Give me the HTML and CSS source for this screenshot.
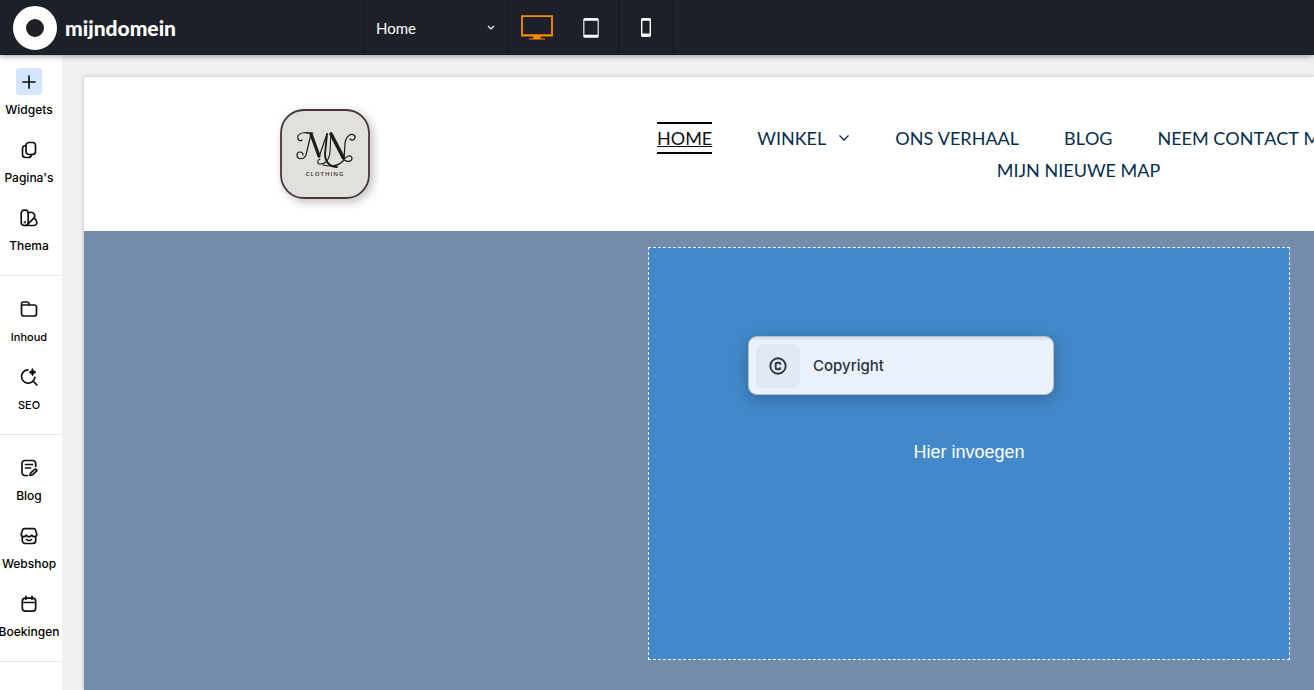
FILE: index.html
```html
<!DOCTYPE html>
<html lang="nl">
<head>
<meta charset="utf-8">
<title>Mijndomein editor</title>
<link rel="stylesheet" href="styles.css">
</head>
<body>
<header class="topbar">
  <a class="brand" href="#">
    <svg class="brand-mark" viewBox="0 0 44 44" aria-hidden="true"><circle cx="22" cy="22" r="15.5" fill="none" stroke="#fff" stroke-width="13"/></svg>
    <span>mijndomein</span>
  </a>
  <div class="page-picker">
    <select class="page-select" aria-label="Pagina"><option>Home</option></select>
    <svg class="picker-arrow" viewBox="0 0 8 6" aria-hidden="true"><path d="M1 1l3 3 3-3" fill="none" stroke="#fff" stroke-width="1.2"/></svg>
  </div>
  <button class="device" aria-label="Desktop">
    <svg width="32" height="25" viewBox="0 0 32 25"><path d="M1 1.200h30v19.300H1z" fill="none" stroke="#ff8a00" stroke-width="1.800"/><path d="M1 20h30M13 21h6v3h-6zM8 24h16" fill="#ff8a00" stroke="#ff8a00" stroke-width="1.200"/></svg>
  </button>
  <button class="device device-end" aria-label="Tablet">
    <svg width="16" height="20" viewBox="0 0 16 20"><rect x=".8" y=".8" width="14.400" height="18.400" rx="1" fill="none" stroke="#ddd" stroke-width="1.300"/><path d="M1 1.500h14M1 18h14" stroke="#fff" stroke-width="2.400"/></svg>
  </button>
  <button class="device device-end" aria-label="Mobiel">
    <svg width="10" height="19" viewBox="0 0 10 19"><rect x=".7" y=".7" width="8.600" height="17.600" rx="1" fill="none" stroke="#fff" stroke-width="1.400"/><path d="M1 1.500h8M1 16.800h8" stroke="#fff" stroke-width="2.600"/></svg>
  </button>
</header>
<div class="workspace">
  <nav class="sidebar" aria-label="Editor">
    <div class="group group-first">
      <button class="tool active"><span class="tool-icon"><svg viewBox="0 0 18 18"><path d="M9 3v12M3 9h12"/></svg></span>Widgets</button>
      <button class="tool"><span class="tool-icon"><svg viewBox="0 0 18 18"><rect x="6" y="1.500" width="9.500" height="12" rx="3"/><path d="M6 4.500C4 4.500 2.500 5.500 2.500 7.500v6a3 3 0 0 0 3 3h2.800c1.900 0 3-.9 3.400-3"/></svg></span>Pagina's</button>
      <button class="tool"><span class="tool-icon"><svg viewBox="0 0 18 18"><rect x="1.200" y="1.200" width="7" height="15.300" rx="3"/><path d="M8.200 4.200c3-2 5.500-.5 6.300 1.500.6 1.500 0 2.700-1 3.700L7.500 15.500M5 16.500h9c2.200 0 3.200-2.400 2.600-4-.4-1.500-1.300-2.700-2.500-3.200"/><circle cx="4.800" cy="13.300" r=".4"/></svg></span>Thema</button>
    </div>
    <div class="group">
      <button class="tool small"><span class="tool-icon"><svg viewBox="0 0 18 18"><path d="M1.500 5v8.500A2.500 2.500 0 0 0 4 16h10a2.500 2.500 0 0 0 2.500-2.500V7.300A2.300 2.300 0 0 0 14.200 5zM1.500 5V3.800C1.500 2.700 2.200 2 3.300 2H7c1 0 1.600.5 2 1.400L9.600 5"/></svg></span>Inhoud</button>
      <button class="tool small"><span class="tool-icon"><svg viewBox="0 0 18 18"><path d="M8 1.800a6.700 6.700 0 1 0 6.900 7.500M13 13l3.800 3.800"/><path d="M12.500.7l1.300 2.200 2.200 1.300-2.200 1.300-1.300 2.200-1.300-2.200L9 4.200l2.200-1.300z" fill="#111" stroke-width=".8"/></svg></span>SEO</button>
    </div>
    <div class="group">
      <button class="tool"><span class="tool-icon"><svg viewBox="0 0 18 18"><path d="M7.500 16.500H5A3 3 0 0 1 2 13.500v-9a3 3 0 0 1 3-3h7.700a3 3 0 0 1 3 3v3M5.500 5.500h7M5.500 9h5M10.500 14.200l4.200-3.800c1.300-.9 2.700.7 1.800 1.800l-3.800 3.500-2.700.8z"/></svg></span>Blog</button>
      <button class="tool"><span class="tool-icon"><svg viewBox="0 0 18 18"><path d="M2.300 9.500v4a3 3 0 0 0 3 3h7.400a3 3 0 0 0 3-3v-4M1.300 7l1.300-4.200c.3-.8.800-1.200 1.600-1.200h9.600c.8 0 1.300.4 1.600 1.200L16.700 7c.5 2.800-3.200 3.700-4.900 1.200-1 2.200-4.600 2.200-5.600 0C4.500 10.700.8 9.800 1.300 7zM6.500 12.500c1.300 1.300 3.700 1.300 5 0"/></svg></span>Webshop</button>
      <button class="tool"><span class="tool-icon"><svg viewBox="0 0 18 18"><rect x="2.300" y="3.200" width="13.400" height="13" rx="3.200"/><path d="M2.300 7.500h13.400M6 1.300v3M12 1.300v3"/></svg></span>Boekingen</button>
    </div>
  </nav>
  <main class="stage">
    <div class="site">
      <header class="site-header">
        <a class="site-logo" href="#" aria-label="MN Clothing">
          <svg viewBox="0 0 90 90">
            <rect x="1" y="1" width="88" height="88" rx="23" fill="#e2e0db" stroke="#45373a" stroke-width="1.800"/>
            <g fill="none" stroke="#1b1c1b" stroke-linecap="round">
              <path d="M22 31c-2 2-5 0-4-4 2-4 9-4 13-2M31 25l-5 21c-2 5-9 5-9 0 0-4 6-4 6 0" stroke-width="1.200"/>
              <path d="M31 25l8 22" stroke-width="3.200"/>
              <path d="M39 48l8-23M27 24h6" stroke-width="1.200"/>
              <path d="M47 25l-2 20c0 8 5 13 12 13" stroke-width="1.900"/>
              <path d="M51 25c-1 8 0 17-2 23-2 6-5 7-9 7-3 0-3-4 0-5" stroke-width="1.100"/>
              <path d="M51 25l12 23" stroke-width="3.600"/>
              <path d="M64 50l1-16c1-7 6-10 9-8 3 3-1 7-4 4M62 49c4 5 10 4 10 0-1-4-6-2-8 2-5 6-13 7-21 5" stroke-width="1.200"/>
            </g>
            <text x="45" y="67" text-anchor="middle" class="logo-text">CLOTHING</text>
          </svg>
        </a>
        <nav class="site-nav" aria-label="Site">
          <div class="nav-row">
            <a class="nav-link current" href="#">HOME</a>
            <a class="nav-link" href="#">WINKEL<svg width="12" height="8" viewBox="0 0 12 8"><path d="M1.500 1.500L6 6l4.500-4.500" fill="none" stroke="#052d4d" stroke-width="1.300"/></svg></a>
            <a class="nav-link" href="#">ONS VERHAAL</a>
            <a class="nav-link" href="#">BLOG</a>
            <a class="nav-link" href="#">NEEM CONTACT MET</a>
          </div>
          <div class="nav-row second">
            <a class="nav-link" href="#">MIJN NIEUWE MAP</a>
          </div>
        </nav>
      </header>
      <section class="hero">
        <div class="dropzone">
          <span>Hier invoegen</span>
          <div class="dragged">
            <span class="dragged-icon"><svg width="18" height="18" viewBox="0 0 18 18"><circle cx="9" cy="9" r="7.700" stroke-width="1.900"/><path d="M11.300 7.700V7c0-.9-.5-1.300-1.300-1.300H8C7.200 5.700 6.700 6.100 6.700 7v4c0 .9.500 1.300 1.300 1.300h2c.8 0 1.300-.4 1.300-1.300v-.7" stroke-width="1.900"/></svg></span>
            <span>Copyright</span>
          </div>
        </div>
      </section>
    </div>
  </main>
</div>
</body>
</html>
```
FILE: styles.css
```css
* { box-sizing: border-box; }
body { margin: 0; height: 100vh; display: flex; flex-direction: column; overflow: hidden; background: #f1f1f1; font-family: Inter, sans-serif; }
button { border: 0; padding: 0; background: none; font-family: inherit; cursor: pointer; }
a { text-decoration: none; }

.topbar { display: flex; flex: none; height: 55px; background: #1e2029; box-shadow: 0 1px 6px rgba(0, 0, 0, .4); z-index: 2; }
.brand { display: flex; align-items: center; gap: 8px; width: 364px; padding-left: 13px; color: #fff; font: 900 21px/24px Lato, sans-serif; }
.brand-mark { width: 44px; height: 44px; }
.page-picker { display: grid; align-items: center; width: 145px; border: solid #13151c; border-width: 0 1px; }
.page-select { grid-area: 1 / 1; height: 100%; padding: 0 11px; border: 0; appearance: none; background: none; color: #fff; font: 400 15px/20px Lato, sans-serif; }
.picker-arrow { grid-area: 1 / 1; justify-self: end; width: 8px; margin-right: 13px; pointer-events: none; }
.device { display: grid; place-items: center; width: 55px; }
.device-end { border-right: 1px solid #13151c; }

.workspace { display: flex; flex: 1; min-height: 0; }
.sidebar { flex: none; width: 62px; background: #fff; }
.group { display: flex; flex-direction: column; gap: 18px; padding: 19px 4px 21px 0; border-bottom: 1px solid #e9e9e9; }
.group-first { padding-top: 13px; }
.tool { display: flex; flex-direction: column; align-items: center; gap: 7px; color: #000; font-size: 12px; font-weight: 500; line-height: 16px; white-space: nowrap; }
.small { font-size: 11px; }
.tool-icon { display: grid; place-items: center; width: 26px; height: 27px; border-radius: 4px; }
.tool-icon svg { width: 18px; height: 18px; fill: none; stroke: #111; stroke-width: 1.7; stroke-linecap: round; stroke-linejoin: round; }
.active .tool-icon { background: #d3e5ff; }

.stage { display: flex; flex: 1; min-width: 0; padding: 22px 0 0 22px; }
.site { display: flex; flex: 1; flex-direction: column; min-width: 0; background: #fff; box-shadow: 0 0 4px rgba(0, 0, 0, .25); }
.site-header { display: flex; gap: 265px; height: 154px; padding-left: 196px; overflow: hidden; }
.site-logo { flex: none; align-self: center; width: 90px; height: 90px; border-radius: 24px; box-shadow: 3px 3px 10px rgba(0, 0, 0, .25); }
.site-logo svg { display: block; }
.logo-text { font: 600 6px "Open Sans", sans-serif; fill: #333; letter-spacing: 1px; }
.site-nav { flex: none; width: 887px; padding-top: 45px; }
.nav-row { display: flex; gap: 45px; height: 32px; padding: 0 22px; }
.second { justify-content: center; }
.nav-link { display: flex; align-items: center; gap: 12px; height: 32px; color: #052d4d; font: 400 18px/28px Lato, sans-serif; font-kerning: none; white-space: nowrap; }
.current { border: solid #000; border-width: 2px 0; color: #111; text-decoration: underline; text-decoration-thickness: 1px; }

.hero { display: grid; grid-template-columns: 564fr 642fr; flex: 1; padding: 16px 24px 30px 0; background: #758bac; }
.dropzone { position: relative; grid-column: 2; display: grid; place-items: center; padding-bottom: 4px; border: 1px dashed #fff; background: #4389ca; color: #fff; font: 400 18px/24px "Liberation Sans", Arial, sans-serif; }
.dragged { position: absolute; top: 88px; left: 99px; display: flex; align-items: center; gap: 13px; width: 306px; height: 59px; padding: 7px; border: 1px solid #b7c0cc; border-radius: 9px; background: linear-gradient(#d3dbe5, #ebf2fb 4px); box-shadow: 0 4px 16px rgba(20, 50, 90, .4); color: #2b3347; font: 500 15px/20px Inter, sans-serif; }
.dragged-icon { display: grid; place-items: center; width: 44px; height: 44px; border-radius: 6px; background: #e3e9f2; }
.dragged-icon svg { fill: none; stroke: #2b3347; }
```
